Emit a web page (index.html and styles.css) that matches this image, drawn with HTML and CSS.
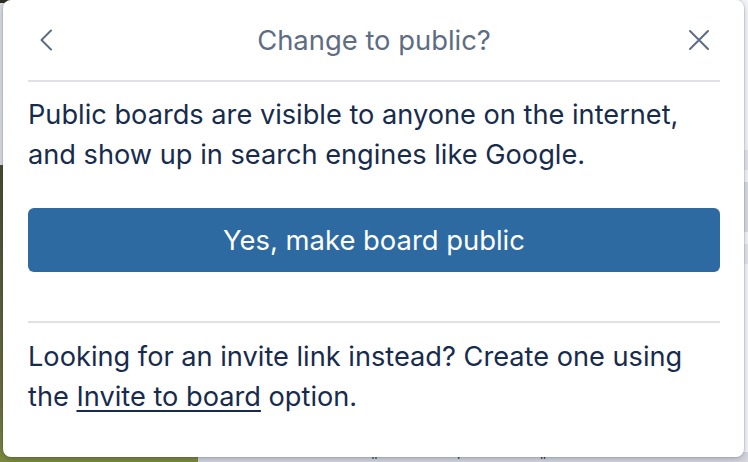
FILE: index.html
```html
<!DOCTYPE html>
<html lang="en">
<head>
<meta charset="utf-8">
<title>Change to public?</title>
<link rel="stylesheet" href="styles.css">
</head>
<body>
<div class="board">
  <div class="side">
    <div class="side-card"></div>
    <div class="side-photo"></div>
  </div>
  <div class="lists">
    <div class="list-card"></div>
    <div class="list-card dark"></div>
    <div class="list-card"></div>
    <div class="list-foot"><span>·</span><span>ıl</span><span>ı</span><span>ıı</span><span>·</span><span>·</span></div>
  </div>
</div>

<section class="popover" role="dialog" aria-label="Change to public?">
  <header class="pop-header">
    <button class="icon-btn back" aria-label="Back">
      <svg width="14" height="22" viewBox="0 0 14 22"><path d="M12 1.5 L2.5 11 L12 20.5" fill="none" stroke="#5e6c84" stroke-width="2" stroke-linecap="round" stroke-linejoin="round"/></svg>
    </button>
    <h2 class="pop-title">Change to public?</h2>
    <button class="icon-btn close" aria-label="Close">
      <svg width="22" height="22" viewBox="0 0 22 22"><path d="M2 2 L20 20 M20 2 L2 20" fill="none" stroke="#5e6c84" stroke-width="2" stroke-linecap="round"/></svg>
    </button>
  </header>
  <div class="pop-body">
    <p class="text">Public boards are visible to anyone on the internet, and show up in search engines like Google.</p>
    <button class="primary">Yes, make board public</button>
    <hr class="divider">
    <p class="text">Looking for an invite link instead? Create one using the <a href="#" class="link">Invite to board</a> option.</p>
  </div>
</section>
</body>
</html>
```

FILE: styles.css
```css
* { box-sizing: border-box; }

html, body {
  margin: 0;
  padding: 0;
  width: 748px;
  height: 462px;
  overflow: hidden;
}

body {
  font-family: Inter, Roboto, "Liberation Sans", sans-serif;
  color: #172b4d;
  background: #f4f5f7;
  position: relative;
}

/* underlying board */
.board {
  display: grid;
  grid-template-columns: 198px 1fr;
  height: 462px;
}

.side {
  display: flex;
  flex-direction: column;
  background: #2f2f20;
  padding-top: 3px;
}

.side-card {
  height: 162px;
  background: #dcdde1;
}

.side-photo {
  flex: 1;
  background: linear-gradient(180deg, #4a4a2e 0%, #5f603a 50%, #6c6d3c 80%, #7d8a3c 100%);
}

.lists {
  display: flex;
  flex-direction: column;
  background: #f4f5f7;
  padding-top: 150px;
  gap: 12px;
}

.list-card {
  height: 20px;
  background: #e4e5e9;
}

.list-card.dark {
  height: 50px;
  background: #d9dbe0;
}

.list-foot {
  margin-top: auto;
  height: 10px;
  background: #d5d7dc;
  display: flex;
  gap: 80px;
  padding-left: 90px;
  font-size: 12px;
  line-height: 6px;
  color: #172b4d;
}

/* popover */
.popover {
  position: absolute;
  left: 3px;
  top: 0;
  width: 741px;
  height: 457px;
  background: #ffffff;
  border-radius: 8px;
  box-shadow: 0 2px 6px rgba(9, 30, 66, 0.25), 0 0 0 1px rgba(9, 30, 66, 0.08);
}

.pop-header {
  height: 82px;
  margin: 0 24px 0 25px;
  border-bottom: 2px solid #dfe1e6;
  display: grid;
  grid-template-columns: 48px 1fr 48px;
  align-items: center;
}

.icon-btn {
  border: 0;
  background: none;
  padding: 0;
  display: flex;
  align-items: center;
  height: 40px;
}

.icon-btn.back {
  justify-content: flex-start;
  padding-left: 11px;
}

.icon-btn.close {
  justify-content: flex-end;
  padding-right: 10px;
}

.pop-title {
  margin: 0;
  text-align: center;
  font-weight: 400;
  font-size: 27.4px;
  line-height: 40px;
  color: #5e6c84;
}

.pop-body {
  padding: 13px 24px 0 25px;
}

.text {
  margin: 0;
  font-size: 27.2px;
  line-height: 40px;
  color: #172b4d;
}

.link {
  color: #172b4d;
  text-decoration: underline;
  text-decoration-thickness: 2px;
  text-underline-offset: 4px;
}

.primary {
  display: block;
  width: 100%;
  height: 64px;
  margin-top: 33px;
  border: 0;
  border-radius: 6px;
  background: #2c6aa1;
  color: #ffffff;
  font-family: inherit;
  font-size: 27.4px;
}

.divider {
  margin: 49px 0 0;
  border: 0;
  height: 2px;
  background: #dfe1e6;
}

.divider + .text {
  margin-top: 14px;
}
```
